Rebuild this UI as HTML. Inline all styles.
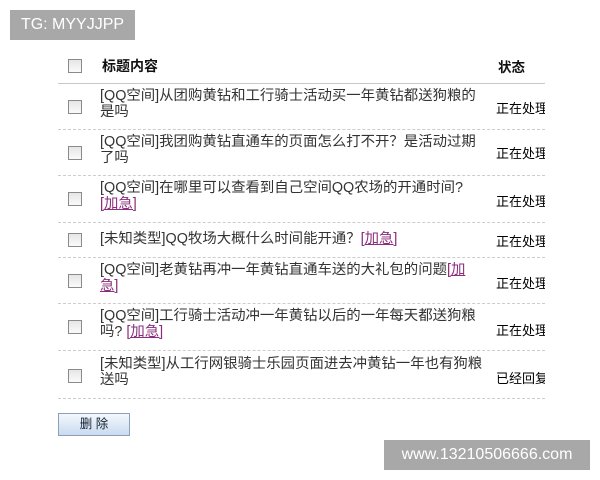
<!DOCTYPE html>
<html><head><meta charset="utf-8"><style>
body{margin:0;width:600px;height:480px;background:#fff;position:relative;overflow:hidden;font-family:"Liberation Sans","Noto Sans CJK SC","WenQuanYi Zen Hei",sans-serif;}
.a{position:absolute;white-space:nowrap;}
.cb{position:absolute;left:68px;width:12px;height:12px;border:1px solid #8a8a8a;background:linear-gradient(#e6e6e6,#fafafa);}
.t{position:absolute;left:100px;font-size:14.4px;line-height:15.5px;color:#333;white-space:nowrap;}
.s{position:absolute;left:496px;font-size:13px;color:#000;white-space:nowrap;width:49px;overflow:hidden;}
.hl{position:absolute;left:58px;width:487px;border-top:1px dashed #ccc;height:0;}
.u{color:#8b2c7c;text-decoration:underline;}
</style></head><body>
<div class="a" style="left:10px;top:10px;width:125px;height:30px;background:#a8a8a8;color:#fff;font-size:16px;line-height:30px;text-align:center;">TG: MYYJJPP</div>
<div class="cb" style="top:59px"></div>
<div class="a" style="left:102px;top:56px;font-size:14px;font-weight:bold;color:#111">标题内容</div>
<div class="a" style="left:498px;top:56px;font-size:13.5px;font-weight:bold;color:#111">状态</div>
<div class="a" style="left:58px;top:83px;width:487px;height:1px;background:#c8c8c8"></div>

<div class="cb" style="top:100px"></div>
<div class="t" style="top:89px">[QQ空间]从团购黄钻和工行骑士活动买一年黄钻都送狗粮的<br>是吗</div>
<div class="s" style="top:98px">正在处理</div>
<div class="hl" style="top:129px"></div>

<div class="cb" style="top:146px"></div>
<div class="t" style="top:135px">[QQ空间]我团购黄钻直通车的页面怎么打不开？是活动过期<br>了吗</div>
<div class="s" style="top:143px">正在处理</div>
<div class="hl" style="top:175px"></div>

<div class="cb" style="top:192px"></div>
<div class="t" style="top:181px">[QQ空间]在哪里可以查看到自己空间QQ农场的开通时间?<br><span class="u">[加急]</span></div>
<div class="s" style="top:191px">正在处理</div>
<div class="hl" style="top:222px"></div>

<div class="cb" style="top:233px"></div>
<div class="t" style="top:232px">[未知类型]QQ牧场大概什么时间能开通？<span class="u">[加急]</span></div>
<div class="s" style="top:231px">正在处理</div>
<div class="hl" style="top:257px"></div>

<div class="cb" style="top:274px"></div>
<div class="t" style="top:263px">[QQ空间]老黄钻再冲一年黄钻直通车送的大礼包的问题<span class="u">[加</span><br><span class="u">急]</span></div>
<div class="s" style="top:273px">正在处理</div>
<div class="hl" style="top:303px"></div>

<div class="cb" style="top:320px"></div>
<div class="t" style="top:309px">[QQ空间]工行骑士活动冲一年黄钻以后的一年每天都送狗粮<br>吗? <span class="u">[加急]</span></div>
<div class="s" style="top:320px">正在处理</div>
<div class="hl" style="top:350px"></div>

<div class="cb" style="top:369px"></div>
<div class="t" style="top:357px">[未知类型]从工行网银骑士乐园页面进去冲黄钻一年也有狗粮<br>送吗</div>
<div class="s" style="top:368px">已经回复</div>
<div class="hl" style="top:398px"></div>

<div class="a" style="left:58px;top:413px;width:70px;height:21px;border:1px solid #8aa0bd;background:linear-gradient(#f4f8fd,#c9daf0);font-size:12.5px;line-height:21px;text-align:center;color:#123">删 除</div>

<div class="a" style="left:384px;top:440px;width:206px;height:30px;background:#a8a8a8;color:#fff;font-size:16px;line-height:30px;text-align:center;">www.13210506666.com</div>
</body></html>
